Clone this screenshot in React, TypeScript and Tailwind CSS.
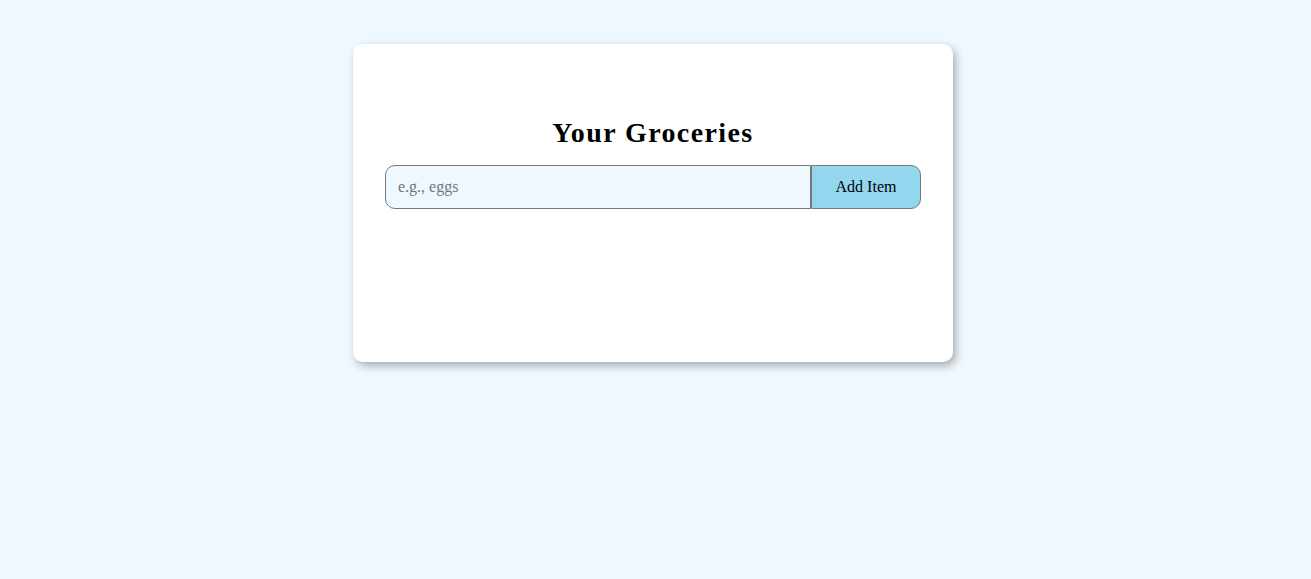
export default function App() {
  return (
    <div className="flex min-h-[579px] w-full justify-center bg-[#f0f8ff] pr-[5px] pt-[44px] font-['Liberation_Serif',serif]">
      <div className="flex h-[318px] w-[600px] flex-col rounded-[10px] bg-white px-8 pt-[73px] shadow-[3px_4px_8px_rgba(0,0,0,0.3)]">
        <h1 className="text-center text-[28px] font-bold leading-[32px] tracking-[1.4px] text-black">
          Your Groceries
        </h1>
        <form className="mt-[16px] flex h-[44px]" onSubmit={(e) => e.preventDefault()}>
          <input
            type="text"
            placeholder="e.g., eggs"
            className="h-full flex-1 rounded-l-[10px] border border-[#777] bg-[#f0f8ff] px-3 text-base text-black placeholder-[#757575] outline-none"
          />
          <button
            type="submit"
            className="h-full w-[110px] rounded-r-[10px] border border-[#777] bg-[#93d7ef] text-base text-black"
          >
            Add Item
          </button>
        </form>
      </div>
    </div>
  );
}
